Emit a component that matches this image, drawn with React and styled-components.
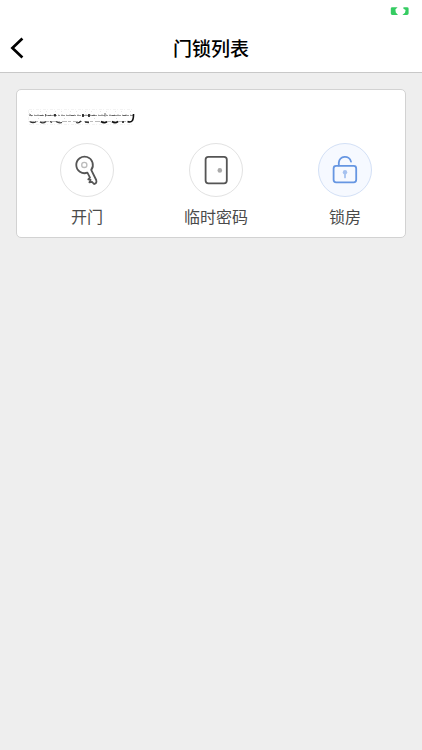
import styled, { createGlobalStyle } from "styled-components";

const locks = [{ id: 1 }];

const App = () => {
  return (
    <>
      <GlobalStyle />
      <Page>
        <StatusBar>
          <BatteryIcon />
        </StatusBar>
        <Header>
          <BackButton aria-label="返回">
            <BackIcon />
          </BackButton>
          <Title>门锁列表</Title>
        </Header>
        <List>
          {locks.map((lock) => (
            <LockCard key={lock.id}>
              <LockName>
                <MaskedName />
              </LockName>
              <Actions>
                <Action>
                  <Circle>
                    <KeyIcon />
                  </Circle>
                  <Label>开门</Label>
                </Action>
                <Action>
                  <Circle>
                    <DoorIcon />
                  </Circle>
                  <Label>临时密码</Label>
                </Action>
                <Action>
                  <Circle $active>
                    <UnlockIcon />
                  </Circle>
                  <Label>锁房</Label>
                </Action>
              </Actions>
            </LockCard>
          ))}
        </List>
      </Page>
    </>
  );
};

const BatteryIcon = () => (
  <svg width="20" height="10" viewBox="0 0 20 10" fill="#35cc62">
    <path d="M2.2 1.2H7.6L5.4 3.6L5.8 6.5L8 9H2.2Q.8 9 .8 7.6V2.6Q.8 1.2 2.2 1.2Z" />
    <path d="M13.4 1.2H17Q18.6 1.2 18.6 2.6V7.6Q18.6 9 17 9H12.4L15 6.8L15.6 4L13.4 2.8Z" />
  </svg>
);

const BackIcon = () => (
  <svg width="14" height="22" viewBox="0 0 14 22" fill="none">
    <path d="M12.4 1.5L2.4 11L12.4 20.5" stroke="#000" strokeWidth="2.7" />
  </svg>
);

// the lock's name is rubbed out, only the edges of its letters are left
const MaskedName = () => (
  <svg width="108" height="18" viewBox="0 0 108 18" fill="none">
    <path d="M1 1.5H106M1 16.5H104M.5 2V16" stroke="#f3f3f3" strokeDasharray="3 1 1 2" />
    <path d="M3 3.5H104" stroke="#e8e8e8" strokeDasharray="1 8 1 5" />
    <path d="M1 7.5H105" stroke="#999" strokeDasharray="4 1 7 1 2 1" />
    <path d="M1 6.5H105" stroke="#ddd" strokeDasharray="2 3 1 2" />
    <path d="M1 13.5H103" stroke="#bbb" strokeDasharray="5 1 3 2" />
    <path d="M1.5 6L4 8M12 7.5H15M17.5 6V8.5M20 7.5H23M43 7.5H46M64 7.5H67M84 7.5H87M95 7.5H98M77 5V8.5" stroke="#666" />
    <path d="M55 6V9M61 6V9M27 6V8.5" stroke="#111" strokeWidth="1.6" />
    <path d="M2 13.8Q5 15.5 8 13.8M12 14Q15 16 18 13.5M22 13.5L24 14.5M28 13.5Q31 15.5 34 14.5M48 14.5Q51 15.5 53 13M57 14L61 14.5" stroke="#333" strokeWidth="1.3" />
    <path d="M73 13.5Q76 15.7 79 13.8M84 13.5Q87 15.7 90 13.5M94 14H96M99.5 13.5Q105.8 16 105.5 6" stroke="#111" strokeWidth="1.6" />
    <path d="M10 10.5H11M36 10.5H37M66 10.5H67M88 10.5H89" stroke="#ddd" />
  </svg>
);

const KeyIcon = () => (
  <svg width="54" height="54" viewBox="0 0 54 54" fill="none">
    <path
      d="M27.4 29.7A8.3 8.3 0 1 1 31.2 26.9L36.2 37Q37.2 40.4 34 41L32 38.9L29.4 39.4L30.6 36.8L28.3 36.4L30 34.6Z"
      stroke="#555"
      strokeWidth="1.8"
      strokeLinejoin="round"
    />
    <circle cx="24.3" cy="21.9" r="2.6" stroke="#bbb" strokeWidth="1.3" />
  </svg>
);

const DoorIcon = () => (
  <svg width="54" height="54" viewBox="0 0 54 54" fill="none">
    <rect x="16.6" y="13.8" width="21.2" height="26.6" rx="2.8" stroke="#555" strokeWidth="1.8" />
    <circle cx="30.8" cy="27.4" r="2.3" fill="#aaa" />
  </svg>
);

const UnlockIcon = () => (
  <svg width="54" height="54" viewBox="0 0 54 54" fill="none">
    <rect x="15.6" y="22.9" width="22.6" height="16.4" rx="2.5" stroke="#6696e2" strokeWidth="1.8" />
    <path d="M20.8 22.6V19.6A6.2 6.2 0 0 1 33 18.6" stroke="#6696e2" strokeWidth="1.8" strokeLinecap="round" />
    <circle cx="27" cy="29.3" r="2.2" fill="#a6c2f0" />
    <path d="M27 30V34.4" stroke="#a6c2f0" strokeWidth="1.8" strokeLinecap="round" />
  </svg>
);

const GlobalStyle = createGlobalStyle`
  * {
    box-sizing: border-box;
  }
  body {
    margin: 0;
    background: #eee;
    font-family: "Noto Sans CJK SC", sans-serif;
  }
  svg {
    display: block;
    flex-shrink: 0;
  }
`;

const Page = styled.div`
  min-height: 100vh;
  background: #eee;
`;

const StatusBar = styled.div`
  display: flex;
  justify-content: flex-end;
  height: 24px;
  padding: 6px 12px 0 0;
  background: #fff;
`;

const Header = styled.header`
  display: grid;
  grid-template-columns: 60px 1fr 60px;
  align-items: center;
  height: 49px;
  background: #fff;
  border-bottom: 1px solid #c8c8c8;
`;

const BackButton = styled.button`
  padding: 0 0 0 10px;
  border: none;
  background: none;
`;

const Title = styled.h1`
  margin: 0;
  font-size: 19px;
  font-weight: 500;
  line-height: 28px;
  text-align: center;
  color: #000;
`;

const List = styled.main`
  padding: 16px;
`;

const LockCard = styled.section`
  height: 149px;
  padding: 18px 0 0 5px;
  border: 1px solid #d2d2d2;
  border-radius: 5px;
  background: #fff;
`;

const LockName = styled.div`
  height: 35px;
  padding-left: 6px;
`;

const Actions = styled.div`
  display: grid;
  grid-template-columns: repeat(3, 129px);
  padding-left: 0.6px;
`;

const Action = styled.div`
  display: flex;
  flex-direction: column;
  align-items: center;
`;

const Circle = styled.div`
  display: flex;
  align-items: center;
  justify-content: center;
  width: 54px;
  height: 54px;
  border: 1px solid ${(props) => (props.$active ? "#d3e0f6" : "#e2e2e2")};
  border-radius: 50%;
  background: ${(props) => (props.$active ? "#f6f9ff" : "#fff")};
`;

const Label = styled.span`
  margin-top: 7px;
  font-size: 16px;
  line-height: 24px;
  color: #4a4a4a;
`;

export default App;
